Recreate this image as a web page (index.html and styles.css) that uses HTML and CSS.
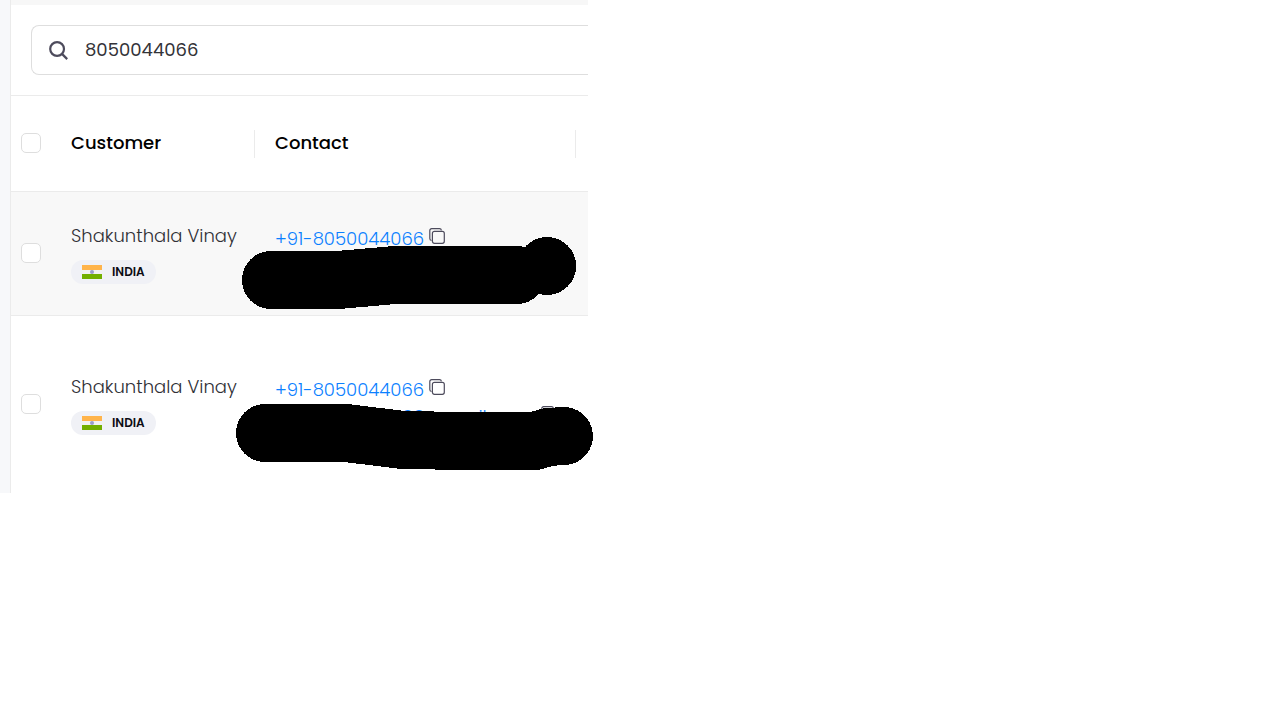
FILE: index.html
```html
<!DOCTYPE html>
<html lang="en">
<head>
<meta charset="UTF-8" />
<meta name="viewport" content="width=device-width, initial-scale=1" />
<title>Customers</title>
<link rel="stylesheet" href="styles.css">
</head>
<body>

<svg class="sprite" aria-hidden="true">
  <symbol id="icon-copy" viewBox="0 0 16 16">
    <path d="M2.5 12.5 A2 2 0 0 1 0.8 10.5 V2.5 A1.8 1.8 0 0 1 2.6 0.7 H10.5 A2 2 0 0 1 12.4 2.4" />
    <rect x="3.4" y="3.4" width="11.9" height="11.9" rx="2" />
  </symbol>
  <symbol id="flag-india" viewBox="0 0 20 14">
    <rect width="20" height="14" fill="#f2f2f2" />
    <rect width="20" height="5" fill="#ffb44b" />
    <rect y="9" width="20" height="5" fill="#73af00" />
    <circle cx="10" cy="7" r="2" fill="#9a9ccb" />
  </symbol>
</svg>

<div class="layout">
  <aside class="rail"></aside>

  <main class="panel">
    <div class="topbar"></div>

    <div class="search-bar">
      <label class="search" for="search">
        <svg class="search-icon" viewBox="0 0 20 20" aria-hidden="true">
          <circle cx="8.1" cy="9" r="6.9" />
          <path d="M13 13.9 L18.2 19.1" />
        </svg>
        <input type="text" id="search" value="8050044066" aria-label="Search customers" />
      </label>
    </div>

    <table class="customers">
      <colgroup>
        <col class="col-check" />
        <col class="col-name" />
        <col class="col-contact" />
        <col />
      </colgroup>
      <thead>
        <tr>
          <th class="check"><input type="checkbox" aria-label="Select all" /></th>
          <th><div class="head">Customer</div></th>
          <th class="contact"><div class="head">Contact</div></th>
          <th></th>
        </tr>
      </thead>
      <tbody>
        <tr class="active">
          <td class="check"><input type="checkbox" aria-label="Select row 1" /></td>
          <td>
            <div class="name">Shakunthala Vinay</div>
            <div class="country"><svg><use href="#flag-india" /></svg>INDIA</div>
          </td>
          <td class="contact">
            <div class="line">
              <a href="tel:+918050044066">+91-8050044066</a>
              <button class="copy" aria-label="Copy phone"><svg><use href="#icon-copy" /></svg></button>
            </div>
            <div class="line"></div>
            <svg class="redact" viewBox="235 192 360 123" aria-hidden="true">
              <path d="M271 280 H338 L395 275 H517" />
              <path d="M547 266 h0.1" />
            </svg>
          </td>
          <td></td>
        </tr>
        <tr class="last">
          <td class="check"><input type="checkbox" aria-label="Select row 2" /></td>
          <td>
            <div class="name">Shakunthala Vinay</div>
            <div class="country"><svg><use href="#flag-india" /></svg>INDIA</div>
          </td>
          <td class="contact">
            <div class="line">
              <a href="tel:+918050044066">+91-8050044066</a>
              <button class="copy" aria-label="Copy phone"><svg><use href="#icon-copy" /></svg></button>
            </div>
            <div class="line email">
              <span>88</span>
              <span>il</span>
              <button class="copy" aria-label="Copy email"><svg><use href="#icon-copy" /></svg></button>
            </div>
            <svg class="redact" viewBox="235 316 360 177" aria-hidden="true">
              <path d="M265 433 H346 L403 440 L465 441 L535 441 L548 437 L564 436" />
            </svg>
          </td>
          <td></td>
        </tr>
      </tbody>
    </table>
  </main>
</div>

</body>
</html>
```

FILE: styles.css
```css
* {
  margin: 0; padding: 0; box-sizing: border-box;
}
body {
  background: #fff;
  color: #3f4047;
  font-family: Poppins, Inter, "Liberation Sans", sans-serif;
  font-size: 18px;
  line-height: 24px;
}
.sprite {
  display: none;
}
.layout {
  display: flex;
  max-width: 588px;
}
.rail {
  width: 10px;
  background: #f7f8fa;
}
.panel {
  flex: 1;
  min-width: 0;
  border-left: 1px solid #ebebeb;
}
.topbar {
  height: 5px;
  background: #f7f7f7;
}

/* Search */
.search-bar {
  padding: 20px 0 20px 20px;
  border-bottom: 1px solid #ebebeb;
}
.search {
  display: flex;
  align-items: center;
  gap: 16px;
  height: 50px;
  padding-left: 17px;
  border: 1px solid #dedede;
  border-right: none;
  border-radius: 8px 0 0 8px;
}
.search-icon {
  width: 20px;
  height: 20px;
  fill: none;
  stroke: #4d4b5c;
  stroke-width: 2.2;
}
.search input {
  flex: 1;
  min-width: 0;
  border: none;
  outline: none;
  background: none;
  color: #333338;
  font: inherit;
}

/* Table */
.customers {
  width: 100%;
  table-layout: fixed;
  border-collapse: separate;
  border-spacing: 0;
  text-align: left;
}
.col-check { width: 60px; }
.col-name { width: 184px; }
.col-contact { width: 321px; }
th {
  height: 96px;
  color: #000;
  font-weight: 500;
  border-bottom: 1px solid #ebebeb;
}
td {
  height: 124px;
  vertical-align: middle;
}
.active td {
  background: #f8f8f8;
  border-bottom: 1px solid #ebebeb;
}
.last td {
  height: 177px;
}
.head {
  height: 28px;
  line-height: 26px;
  border-right: 1px solid #ebebeb;
}
.check {
  padding-bottom: 2px;
}
.contact {
  position: relative;
  padding-left: 20px;
}
td.contact {
  padding-bottom: 3px;
}
input[type="checkbox"] {
  appearance: none;
  display: block;
  width: 20px;
  height: 20px;
  margin-left: 10px;
  background: #fff;
  border: 1px solid #dedede;
  border-radius: 5px;
}
.name {
  color: #303036;
  font-weight: 300;
  white-space: nowrap;
}
.country {
  display: inline-flex;
  align-items: center;
  gap: 10px;
  height: 24px;
  margin-top: 12px;
  padding: 0 11px;
  border-radius: 12px;
  background: #f0f1f6;
  color: #0c0c14;
  font-size: 12px;
  font-weight: 600;
  vertical-align: top;
}
.country svg {
  width: 20px;
  height: 14px;
}
.line {
  display: flex;
  gap: 5px;
  height: 27px;
  line-height: 27px;
  color: #0a80ff;
  font-weight: 300;
}
.line a {
  color: inherit;
  text-decoration: none;
}
.copy {
  width: 16px;
  height: 16px;
  margin-top: 3px;
  border: none;
  background: none;
  cursor: pointer;
}
.copy svg {
  display: block;
  width: 16px;
  height: 16px;
  fill: none;
  stroke: #4d4b5c;
  stroke-width: 1.2;
}
.email {
  gap: 54px;
  padding-left: 127px;
}
.redact {
  position: absolute;
  top: 0;
  left: -20px;
  width: 360px;
  height: 100%;
  fill: none;
  stroke: #000;
  stroke-width: 58;
  stroke-linecap: round;
  stroke-linejoin: round;
  overflow: visible;
  shape-rendering: crispEdges;
}
```
